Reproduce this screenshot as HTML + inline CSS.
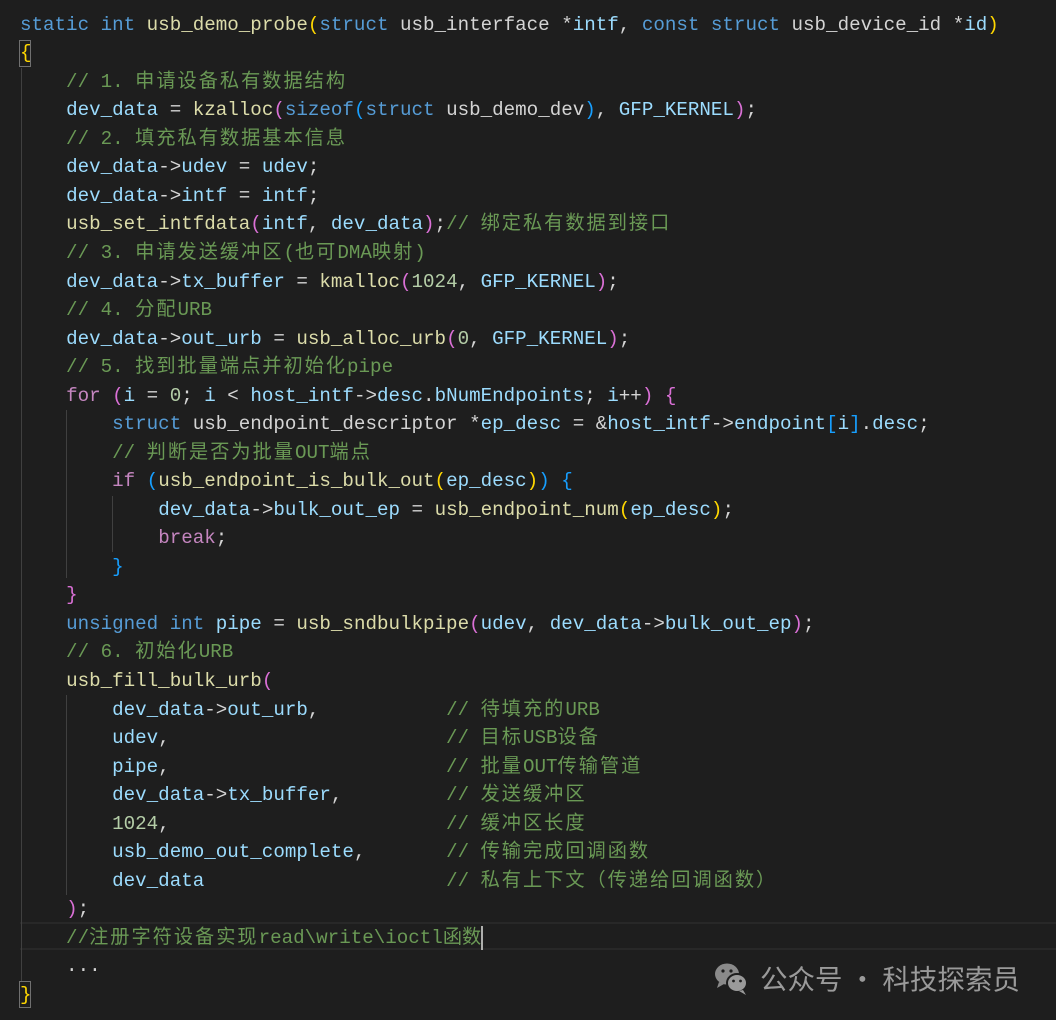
<!DOCTYPE html>
<html><head><meta charset="utf-8"><style>
html,body{margin:0;padding:0;background:#1e1e1e;width:1056px;height:1020px;overflow:hidden;position:relative}
.l{position:absolute;left:20px;height:28.53px;line-height:28.53px;white-space:pre;font-family:"Liberation Mono","Noto Sans CJK SC",monospace;font-size:19.2px;color:#d4d4d4}
.k{color:#569cd6}.f{color:#dcdcaa}.v{color:#9cdcfe}.c{color:#6a9955}.n{color:#b5cea8}.q{color:#c586c0}
.p1{color:#ffd700}.p2{color:#da70d6}.p3{color:#179fff}
.z{letter-spacing:2px;font-family:"Noto Sans CJK SC",sans-serif;line-height:1;vertical-align:0}
.g{position:absolute;width:1px;background:#404040}
</style></head><body>
<div style="position:absolute;left:20px;top:922px;width:1036px;height:28px;border-top:2px solid #282828;border-bottom:2px solid #282828;box-sizing:border-box"></div>
<div class="g" style="left:21px;top:68px;height:914px"></div>
<div class="g" style="left:66px;top:410px;height:168px"></div>
<div class="g" style="left:66px;top:695px;height:200px"></div>
<div class="g" style="left:112px;top:496px;height:56px"></div>
<div style="position:absolute;left:19px;top:40px;width:12px;height:27px;border:1px solid #707070;box-sizing:border-box"></div>
<div style="position:absolute;top:981px;width:12px;height:27px;border:1px solid #707070;box-sizing:border-box;left:19px"></div>
<div class="l" style="top:10.7px"><span class="k">static</span> <span class="k">int</span> <span class="f">usb_demo_probe</span><span class="p1">(</span><span class="k">struct</span> usb_interface *<span class="v">intf</span>, <span class="k">const</span> <span class="k">struct</span> usb_device_id *<span class="v">id</span><span class="p1">)</span></div>
<div class="l" style="top:39.2px"><span class="p1">{</span></div>
<div class="l" style="top:67.8px"><span class="c">    // 1. <span class="z">申请设备私有数据结构</span></span></div>
<div class="l" style="top:96.3px">    <span class="v">dev_data</span> = <span class="f">kzalloc</span><span class="p2">(</span><span class="k">sizeof</span><span class="p3">(</span><span class="k">struct</span> usb_demo_dev<span class="p3">)</span>, <span class="v">GFP_KERNEL</span><span class="p2">)</span>;</div>
<div class="l" style="top:124.8px"><span class="c">    // 2. <span class="z">填充私有数据基本信息</span></span></div>
<div class="l" style="top:153.4px">    <span class="v">dev_data</span>-&gt;<span class="v">udev</span> = <span class="v">udev</span>;</div>
<div class="l" style="top:181.9px">    <span class="v">dev_data</span>-&gt;<span class="v">intf</span> = <span class="v">intf</span>;</div>
<div class="l" style="top:210.4px">    <span class="f">usb_set_intfdata</span><span class="p2">(</span><span class="v">intf</span>, <span class="v">dev_data</span><span class="p2">)</span>;<span class="c">// <span class="z">绑定私有数据到接口</span></span></div>
<div class="l" style="top:239px"><span class="c">    // 3. <span class="z">申请发送缓冲区</span>(<span class="z">也可</span>DMA<span class="z">映射</span>)</span></div>
<div class="l" style="top:267.5px">    <span class="v">dev_data</span>-&gt;<span class="v">tx_buffer</span> = <span class="f">kmalloc</span><span class="p2">(</span><span class="n">1024</span>, <span class="v">GFP_KERNEL</span><span class="p2">)</span>;</div>
<div class="l" style="top:296px"><span class="c">    // 4. <span class="z">分配</span>URB</span></div>
<div class="l" style="top:324.6px">    <span class="v">dev_data</span>-&gt;<span class="v">out_urb</span> = <span class="f">usb_alloc_urb</span><span class="p2">(</span><span class="n">0</span>, <span class="v">GFP_KERNEL</span><span class="p2">)</span>;</div>
<div class="l" style="top:353.1px"><span class="c">    // 5. <span class="z">找到批量端点并初始化</span>pipe</span></div>
<div class="l" style="top:381.6px">    <span class="q">for</span> <span class="p2">(</span><span class="v">i</span> = <span class="n">0</span>; <span class="v">i</span> &lt; <span class="v">host_intf</span>-&gt;<span class="v">desc</span>.<span class="v">bNumEndpoints</span>; <span class="v">i</span>++<span class="p2">)</span> <span class="p2">{</span></div>
<div class="l" style="top:410.2px">        <span class="k">struct</span> usb_endpoint_descriptor *<span class="v">ep_desc</span> = &amp;<span class="v">host_intf</span>-&gt;<span class="v">endpoint</span><span class="p3">[</span><span class="v">i</span><span class="p3">]</span>.<span class="v">desc</span>;</div>
<div class="l" style="top:438.7px"><span class="c">        // <span class="z">判断是否为批量</span>OUT<span class="z">端点</span></span></div>
<div class="l" style="top:467.2px">        <span class="q">if</span> <span class="p3">(</span><span class="f">usb_endpoint_is_bulk_out</span><span class="p1">(</span><span class="v">ep_desc</span><span class="p1">)</span><span class="p3">)</span> <span class="p3">{</span></div>
<div class="l" style="top:495.8px">            <span class="v">dev_data</span>-&gt;<span class="v">bulk_out_ep</span> = <span class="f">usb_endpoint_num</span><span class="p1">(</span><span class="v">ep_desc</span><span class="p1">)</span>;</div>
<div class="l" style="top:524.3px">            <span class="q">break</span>;</div>
<div class="l" style="top:552.8px">        <span class="p3">}</span></div>
<div class="l" style="top:581.4px">    <span class="p2">}</span></div>
<div class="l" style="top:609.9px">    <span class="k">unsigned</span> <span class="k">int</span> <span class="v">pipe</span> = <span class="f">usb_sndbulkpipe</span><span class="p2">(</span><span class="v">udev</span>, <span class="v">dev_data</span>-&gt;<span class="v">bulk_out_ep</span><span class="p2">)</span>;</div>
<div class="l" style="top:638.4px"><span class="c">    // 6. <span class="z">初始化</span>URB</span></div>
<div class="l" style="top:667px">    <span class="f">usb_fill_bulk_urb</span><span class="p2">(</span></div>
<div class="l" style="top:695.5px">        <span class="v">dev_data</span>-&gt;<span class="v">out_urb</span>,           <span class="c">// <span class="z">待填充的</span>URB</span></div>
<div class="l" style="top:724px">        <span class="v">udev</span>,                        <span class="c">// <span class="z">目标</span>USB<span class="z">设备</span></span></div>
<div class="l" style="top:752.6px">        <span class="v">pipe</span>,                        <span class="c">// <span class="z">批量</span>OUT<span class="z">传输管道</span></span></div>
<div class="l" style="top:781.1px">        <span class="v">dev_data</span>-&gt;<span class="v">tx_buffer</span>,         <span class="c">// <span class="z">发送缓冲区</span></span></div>
<div class="l" style="top:809.6px">        <span class="n">1024</span>,                        <span class="c">// <span class="z">缓冲区长度</span></span></div>
<div class="l" style="top:838.2px">        <span class="v">usb_demo_out_complete</span>,       <span class="c">// <span class="z">传输完成回调函数</span></span></div>
<div class="l" style="top:866.7px">        <span class="v">dev_data</span>                     <span class="c">// <span class="z">私有上下文（传递给回调函数）</span></span></div>
<div class="l" style="top:895.2px">    <span class="p2">)</span>;</div>
<div class="l" style="top:923.8px"><span class="c">    //<span class="z" style="letter-spacing:2px">注册字符设备实现</span>read\write\ioctl<span class="z" style="letter-spacing:0">函数</span></span><span style="display:inline-block;width:2px;height:24px;background:#aeafad;vertical-align:middle"></span></div>
<div class="l" style="top:952.3px">    ...</div>
<div class="l" style="top:980.8px"><span class="p1">}</span></div>
<div style="position:absolute;left:712px;top:958px;width:40px;height:40px">
<svg width="40" height="40" viewBox="0 0 40 40"><ellipse cx="15" cy="16" rx="12" ry="10.5" fill="#8a8a8a"/><path d="M7 24 L5 30 L12 26Z" fill="#8a8a8a"/><ellipse cx="25" cy="25" rx="10" ry="9" fill="#9a9a9a" stroke="#1e1e1e" stroke-width="2"/><path d="M31 32 L34 37 L27 33Z" fill="#9a9a9a"/><circle cx="11" cy="13" r="1.6" fill="#1e1e1e"/><circle cx="19" cy="13" r="1.6" fill="#1e1e1e"/><circle cx="21.5" cy="23" r="1.4" fill="#1e1e1e"/><circle cx="28.5" cy="23" r="1.4" fill="#1e1e1e"/></svg></div>
<div style="position:absolute;left:760px;top:958px;font-family:'Noto Sans CJK SC',sans-serif;font-size:27.5px;color:#9a9a9a;line-height:38px;white-space:pre">公众号 · 科技探索员</div>
</body></html>
